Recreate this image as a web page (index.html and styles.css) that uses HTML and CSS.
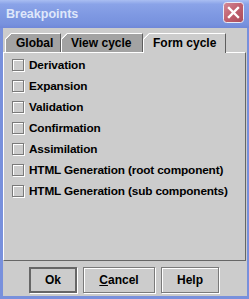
FILE: index.html
```html
<html>
    <head>
        <title>Breakpoints</title>
        <link rel="stylesheet" href="styles.css">
    </head>
    <body>
        <div class="window">
            <div class="titlebar">
                <span class="title">Breakpoints</span>
                <span class="close">
                    <svg width="21" height="21" viewBox="0 0 21 21">
                        <defs>
                            <linearGradient id="cg" x1="0" y1="0" x2="1" y2="1">
                                <stop offset="0" stop-color="#d48a98"/>
                                <stop offset="0.5" stop-color="#c0606e"/>
                                <stop offset="1" stop-color="#a84b5a"/>
                            </linearGradient>
                        </defs>
                        <rect x="0.5" y="0.5" width="20" height="20" rx="3" fill="url(#cg)" stroke="#e8ecf8"/>
                        <path d="M6 6 L15 15 M15 6 L6 15" stroke="#fff" stroke-width="2.4" stroke-linecap="square"/>
                    </svg>
                </span>
            </div>

            <div class="client">
                <div class="tabs">
                    <div class="tab tab-global">Global</div>
                    <div class="tab tab-view">View cycle</div>
                    <div class="tab tab-form selected">Form cycle</div>
                </div>

                <div class="panel">
                    <label class="row"><span class="box"></span>Derivation</label>
                    <label class="row"><span class="box"></span>Expansion</label>
                    <label class="row"><span class="box"></span>Validation</label>
                    <label class="row"><span class="box"></span>Confirmation</label>
                    <label class="row"><span class="box"></span>Assimilation</label>
                    <label class="row"><span class="box"></span>HTML Generation (root component)</label>
                    <label class="row"><span class="box"></span>HTML Generation (sub components)</label>
                </div>

                <div class="buttons">
                    <button class="btn btn-ok">Ok</button>
                    <button class="btn btn-cancel"><u>C</u>ancel</button>
                    <button class="btn btn-help">Help</button>
                </div>
            </div>
        </div>
    </body>
</html>
```
FILE: styles.css
```css
body {
    margin: 0;
    font-family: "Liberation Sans", Arial, sans-serif;
}

.window {
    width: 249px;
    height: 299px;
    background-color: #7890dc;
    display: flex;
    flex-direction: column;
}

.titlebar {
    height: 28px;
    flex-shrink: 0;
    display: flex;
    align-items: center;
    justify-content: space-between;
    padding: 0 5px 0 6px;
    background: linear-gradient(#a9bef2, #8aa3e8 15%, #7e98e2 55%, #7892de 85%, #7088d8);
}

.title {
    color: #dfe7fa;
    font-size: 12.5px;
    font-weight: bold;
    margin-top: -1px;
}

.close {
    display: flex;
    margin-top: -3px;
}

.client {
    flex: 1;
    margin: 0 2px 3px 3px;
    background-color: #cccccc;
    display: flex;
    flex-direction: column;
    padding-top: 5px;
}

.tabs {
    display: flex;
    height: 19px;
    margin-left: 2px;
}

.tab {
    box-sizing: border-box;
    height: 19px;
    padding-left: 9px;
    font-size: 12px;
    font-weight: bold;
    line-height: 18px;
    color: #000;
    border-top: 1px solid #fff;
    border-left: 1px solid #fff;
    border-right: 1px solid #5e5e5e;
    background: linear-gradient(135deg, #fff 0 5.3px, #a3a3a3 5.3px);
    background-origin: border-box;
    clip-path: polygon(0 6px, 6px 0, 100% 0, 100% 100%, 0 100%);
}

.tab-global {
    width: 56px;
    padding-left: 10px;
}

.tab-view {
    width: 82px;
}

.tab-form {
    width: 83px;
}

.tab.selected {
    height: 20px;
    position: relative;
    z-index: 1;
    background: linear-gradient(135deg, #fff 0 5.3px, #cccccc 5.3px);
    background-origin: border-box;
}

.panel {
    box-sizing: border-box;
    height: 209px;
    margin-right: 1px;
    border-top: 1px solid #fff;
    border-left: 1px solid #fff;
    border-right: 1px solid #666;
    border-bottom: 1px solid #666;
    padding: 1px 0 0 4px;
    display: flex;
    flex-direction: column;
}

.row {
    height: 21px;
    display: flex;
    align-items: center;
    gap: 5px;
    font-size: 11.8px;
    font-weight: bold;
    letter-spacing: -0.15px;
    color: #000;
}

.box {
    box-sizing: border-box;
    width: 12px;
    height: 12px;
    border: 1px solid #7a7a7a;
    box-shadow: inset 1px 1px 0 #fff, 1px 1px 0 #fff;
    margin-left: 4px;
}

.buttons {
    display: flex;
    justify-content: center;
    gap: 6px;
    margin-top: 6px;
    margin-left: -2px;
}

.btn {
    box-sizing: border-box;
    height: 26px;
    padding: 0;
    font-family: "Liberation Sans", Arial, sans-serif;
    font-size: 12px;
    font-weight: bold;
    color: #000;
    background-color: #cccccc;
    border: 1px solid #7a7a7a;
    box-shadow: inset 1px 1px 0 #fff, 1px 1px 0 #fff;
}

.btn-ok {
    width: 48px;
    border: 2px solid #666;
    box-shadow: 1px 1px 0 #fff;
}

.btn-cancel {
    width: 72px;
}

.btn-help {
    width: 58px;
}
```
